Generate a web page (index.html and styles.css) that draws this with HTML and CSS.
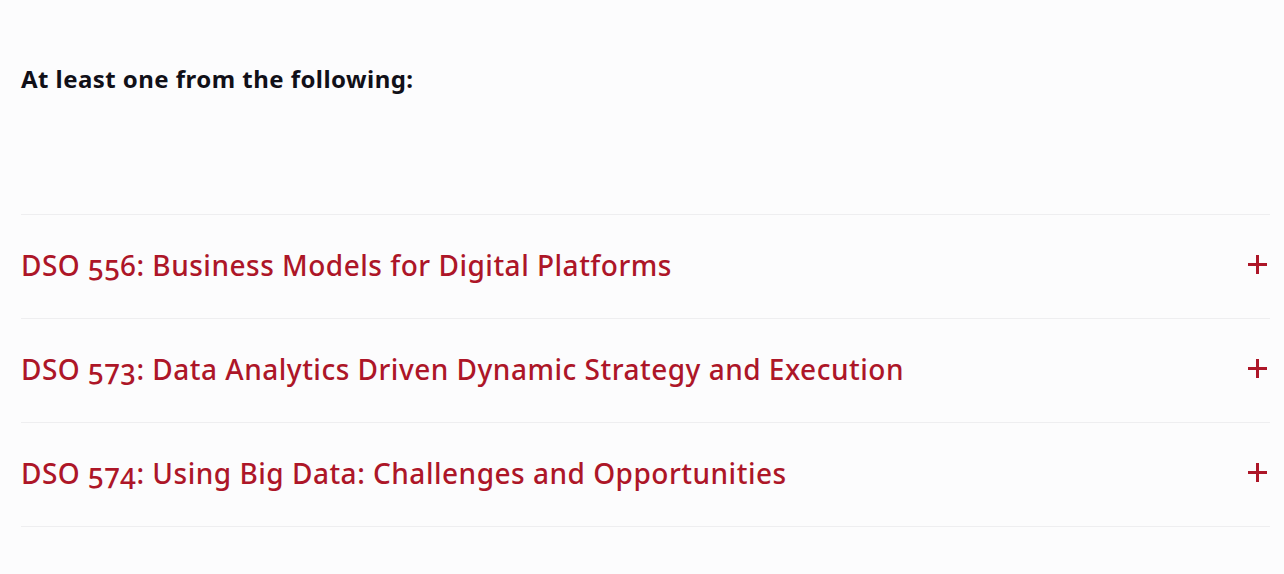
FILE: index.html
```html
<!DOCTYPE html>
<html lang="en">
<head>
<meta charset="utf-8">
<link rel="stylesheet" href="styles.css">
</head>
<body>
<section class="req">
  <h3 class="req-title">At least one from the following:</h3>
  <ul class="courses">
    <li class="course"><span class="course-name">DSO 556: Business Models for Digital Platforms</span><span class="plus" aria-hidden="true"></span></li>
    <li class="course"><span class="course-name">DSO 573: Data Analytics Driven Dynamic Strategy and Execution</span><span class="plus" aria-hidden="true"></span></li>
    <li class="course"><span class="course-name">DSO 574: Using Big Data: Challenges and Opportunities</span><span class="plus" aria-hidden="true"></span></li>
  </ul>
</section>
</body>
</html>
```
FILE: styles.css
```css
html, body {
  margin: 0;
  padding: 0;
  background: #fcfcfd;
}
body {
  font-family: "Noto Sans", "Open Sans", sans-serif;
  font-variant-numeric: oldstyle-nums;
}
.req {
  padding: 62px 14px 0 21px;
}
.req-title {
  margin: 0;
  font-size: 24px;
  line-height: 34px;
  font-weight: 700;
  letter-spacing: 0.45px;
  color: #111018;
}
.courses {
  list-style: none;
  margin: 118px 0 0 0;
  padding: 0;
  border-top: 1px solid #eeeef0;
}
.course {
  box-sizing: border-box;
  display: flex;
  align-items: center;
  justify-content: space-between;
  height: 104px;
  padding-bottom: 4px;
  border-bottom: 1px solid #eeeef0;
}
.course-name {
  font-size: 28px;
  font-weight: 500;
  letter-spacing: 0.5px;
  color: #ad1628;
}
.plus {
  position: relative;
  width: 19px;
  height: 19px;
  margin-right: 3px;
}
.plus::before, .plus::after {
  content: "";
  position: absolute;
  background: #ad1628;
}
.plus::before {
  left: 0;
  right: 0;
  top: 8px;
  height: 2.5px;
}
.plus::after {
  top: 0;
  bottom: 0;
  left: 8px;
  width: 2.5px;
}
```
